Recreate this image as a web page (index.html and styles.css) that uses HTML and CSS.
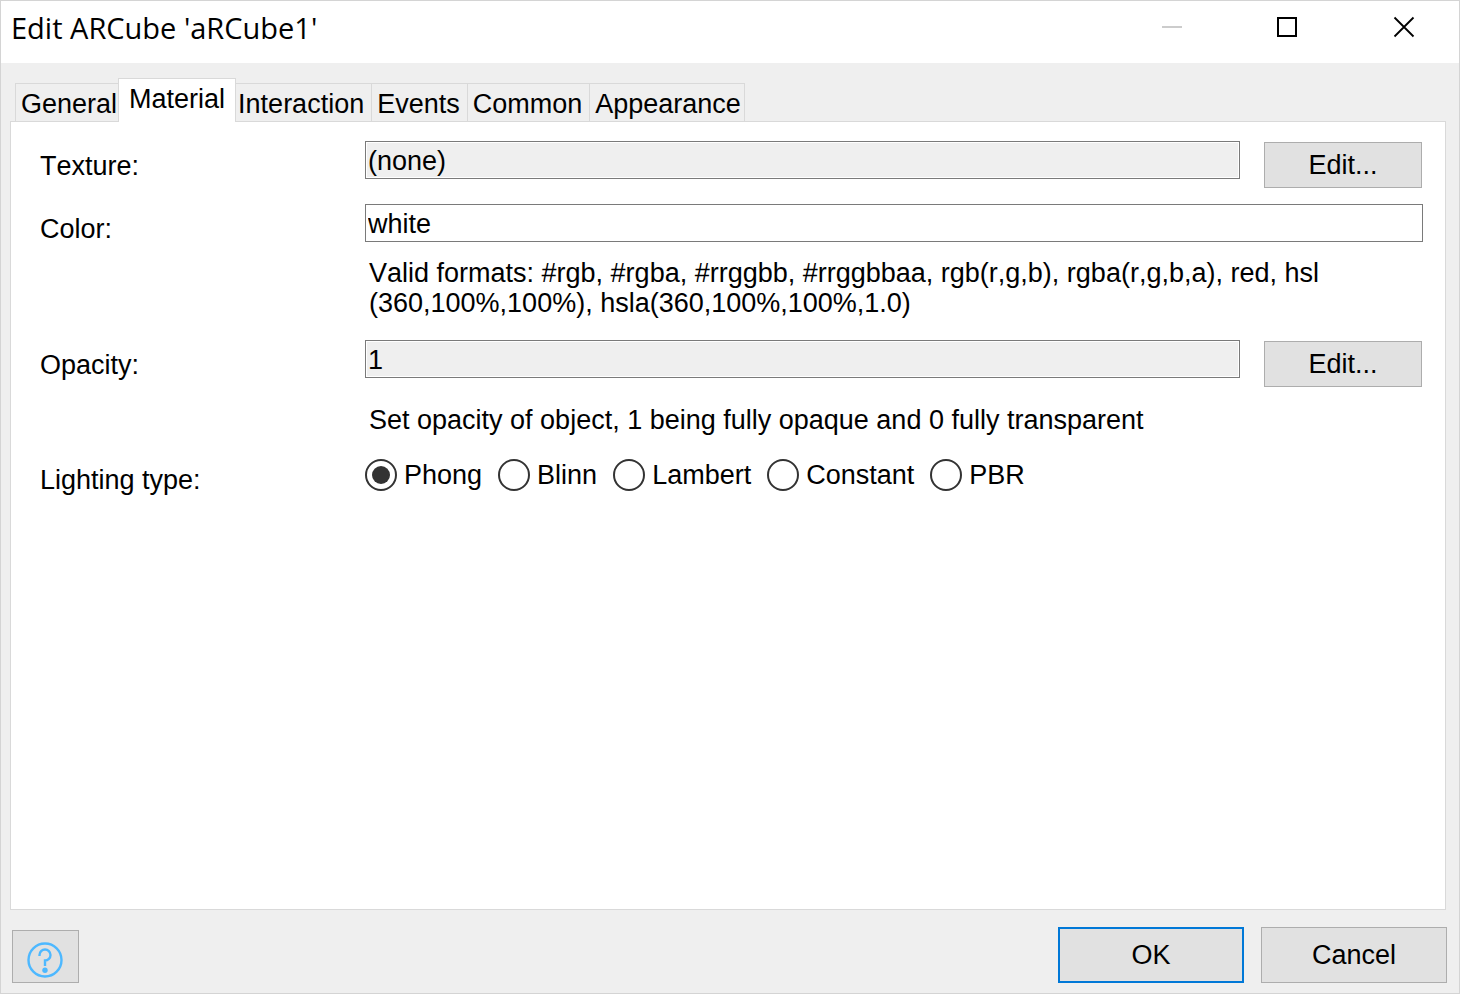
FILE: index.html
```html
<!DOCTYPE html>
<html lang="en">
<head>
<meta charset="utf-8">
<title>Edit ARCube 'aRCube1'</title>
<link rel="stylesheet" href="styles.css">
</head>
<body>
<div class="window">
  <header class="titlebar">
    <h1 class="title">Edit ARCube 'aRCube1'</h1>
    <div class="window-controls">
      <button class="control" type="button" aria-label="Minimize" disabled>
        <svg width="22" height="22" viewBox="0 0 22 22"><path d="M1 11H21" stroke="#ccc" stroke-width="2"/></svg>
      </button>
      <button class="control" type="button" aria-label="Maximize">
        <svg width="22" height="22" viewBox="0 0 22 22"><rect x="1" y="2" width="18" height="18" fill="none" stroke="#000" stroke-width="2"/></svg>
      </button>
      <button class="control" type="button" aria-label="Close">
        <svg width="22" height="22" viewBox="0 0 22 22"><path d="M1.5 1.500L20.500 20.500M20.500 1.500L1.500 20.500" stroke="#000" stroke-width="1.800"/></svg>
      </button>
    </div>
  </header>

  <main class="body">
    <div class="tabs" role="tablist">
      <button class="tab" type="button" role="tab">General</button>
      <button class="tab tab-active" type="button" role="tab" aria-selected="true">Material</button>
      <button class="tab" type="button" role="tab">Interaction</button>
      <button class="tab" type="button" role="tab">Events</button>
      <button class="tab" type="button" role="tab">Common</button>
      <button class="tab" type="button" role="tab">Appearance</button>
    </div>

    <form class="panel" id="material" role="tabpanel">
      <div class="row">
        <label class="label" for="texture">Texture:</label>
        <div class="field">
          <div class="line">
            <input class="input input-readonly" id="texture" type="text" value="(none)" readonly>
            <button class="button edit" type="button">Edit...</button>
          </div>
        </div>
      </div>
      <div class="row">
        <label class="label" for="color">Color:</label>
        <div class="field">
          <input class="input" id="color" type="text" value="white">
          <p class="hint">Valid formats: #rgb, #rgba, #rrggbb, #rrggbbaa, rgb(r,g,b), rgba(r,g,b,a), red, hsl<br>(360,100%,100%), hsla(360,100%,100%,1.0)</p>
        </div>
      </div>
      <div class="row row-opacity">
        <label class="label" for="opacity">Opacity:</label>
        <div class="field">
          <div class="line">
            <input class="input input-readonly" id="opacity" type="text" value="1" readonly>
            <button class="button edit" type="button">Edit...</button>
          </div>
          <p class="hint">Set opacity of object, 1 being fully opaque and 0 fully transparent</p>
        </div>
      </div>
      <div class="row row-lighting" role="radiogroup" aria-labelledby="lighting">
        <span class="label" id="lighting">Lighting type:</span>
        <div class="radios">
          <label class="option"><input class="radio" type="radio" name="lighting" checked>Phong</label>
          <label class="option"><input class="radio" type="radio" name="lighting">Blinn</label>
          <label class="option"><input class="radio" type="radio" name="lighting">Lambert</label>
          <label class="option"><input class="radio" type="radio" name="lighting">Constant</label>
          <label class="option"><input class="radio" type="radio" name="lighting">PBR</label>
        </div>
      </div>
    </form>
  </main>

  <footer class="footer">
    <button class="button help" type="button" aria-label="Help">
      <svg width="36" height="36" viewBox="0 0 36 36" fill="none" stroke="#4db8ff">
        <circle cx="18" cy="18" r="16.500" stroke-width="2.400"/>
        <path d="M12.500 14V13A5.500 5.500 0 1 1 18 18.500V24" stroke-width="2.400"/>
        <circle cx="18" cy="28.200" r="2.700" fill="#4db8ff" stroke="none"/>
      </svg>
    </button>
    <div class="actions">
      <button class="button action action-default" type="submit" form="material">OK</button>
      <button class="button action" type="button">Cancel</button>
    </div>
  </footer>
</div>
</body>
</html>
```
FILE: styles.css
```css
* {
  box-sizing: border-box;
}

body {
  margin: 0;
  color: #000;
  font: 27px/30px "Liberation Sans", Arial, sans-serif;
  font-kerning: none;
}

button,
input {
  margin: 0;
  color: inherit;
  font: inherit;
  font-kerning: inherit;
}

.window {
  display: flex;
  flex-direction: column;
  min-height: 100vh;
  border: 1px solid #d4d4d4;
  background: #efefef;
}

.titlebar {
  display: flex;
  align-items: center;
  justify-content: space-between;
  height: 62px;
  padding: 0 25px 10px 10px;
  background: #fff;
}

.title {
  margin: 0;
  padding-top: 2px;
  font: 400 29px/38px "Open Sans", "Noto Sans", sans-serif;
}

.window-controls {
  display: flex;
  gap: 56px;
}

.control {
  display: flex;
  align-items: center;
  justify-content: center;
  width: 60px;
  height: 40px;
  padding: 0;
  border: 0;
  background: none;
}

.body {
  display: flex;
  flex: 1;
  flex-direction: column;
  padding: 15px 13px 0 9px;
}

.tabs {
  display: flex;
  align-items: flex-end;
  margin-bottom: -1px;
  padding-left: 5px;
}

.tab {
  height: 39px;
  padding: 5px 7px 3px 5px;
  border: 1px solid #d9d9d9;
  border-right-width: 0;
  background: #efefef;
  white-space: nowrap;
}

.tab:last-child {
  padding-right: 3px;
  border-right-width: 1px;
}

.tab-active {
  z-index: 1;
  height: 44px;
  margin: 0 -4px 0 -6px;
  padding: 0 10px 4px;
  border-right-width: 1px;
  border-bottom: 0;
  background: #fff;
}

.panel {
  flex: 1;
  padding: 19px 22px 19px 29px;
  border: 1px solid #d9d9d9;
  background: #fff;
}

.row {
  display: grid;
  grid-template-columns: 325px 1fr;
  align-items: start;
  margin-bottom: 16px;
}

.row-opacity {
  margin-top: 22px;
}

.row-lighting {
  margin-top: 24px;
}

.label {
  padding-top: 10px;
}

.row-lighting .label {
  padding-top: 6px;
}

.line {
  display: flex;
  align-items: flex-start;
  gap: 24px;
  padding-right: 1px;
}

.input {
  display: block;
  flex: 1;
  width: 100%;
  min-width: 0;
  height: 38px;
  padding: 2px 2px 0;
  border: 1px solid #7a7a7a;
  border-radius: 0;
  background: #fff;
}

.input-readonly {
  background: #efefef;
  box-shadow: inset 0 0 0 1px #fff;
}

.button {
  padding: 0;
  border: 1px solid #adadad;
  border-radius: 0;
  background: #e1e1e1;
}

.edit {
  width: 158px;
  height: 46px;
  margin-top: 1px;
}

.hint {
  margin: 16px 0 0;
  padding-left: 4px;
}

.row-opacity .hint {
  margin-top: 18px;
}

.radios {
  display: flex;
  flex-wrap: wrap;
  gap: 16px;
}

.option {
  display: flex;
  align-items: center;
  gap: 7px;
}

.radio {
  width: 32px;
  height: 32px;
  border: 2px solid #333;
  border-radius: 50%;
  appearance: none;
  background: #fff;
}

.radio:checked {
  padding: 5px;
  background: #333 content-box;
}

.footer {
  display: flex;
  align-items: flex-end;
  justify-content: space-between;
  padding: 17px 12px 10px 11px;
}

.help {
  display: flex;
  align-items: center;
  justify-content: center;
  width: 67px;
  height: 53px;
  padding: 6px 1px 0 0;
}

.actions {
  display: flex;
  gap: 17px;
}

.action {
  width: 186px;
  height: 56px;
}

.action-default {
  border: 2px solid #0078d7;
}
```
